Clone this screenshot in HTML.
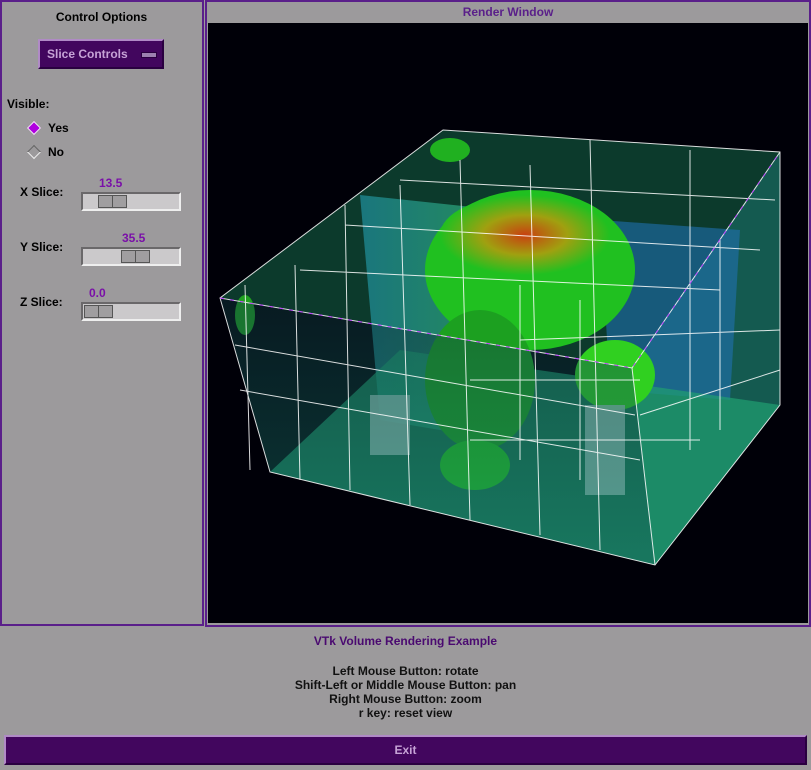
<!DOCTYPE html>
<html><head><style>
body{margin:0;width:811px;height:770px;background:#9c9a9c;font-family:"Liberation Sans",sans-serif;position:relative;overflow:hidden;font-size:12px;font-weight:bold}
.abs{position:absolute}
.left{left:0;top:0;width:204px;height:626px;border:2px solid #5a1f8a;box-sizing:border-box}
.rw{left:205px;top:0;width:606px;height:627px;border:2px solid #5a1f8a;box-sizing:border-box;background:#9c9a9c}
.btn{background:#42065e;color:#c6a2d6;border:2px solid;border-color:#b08ac6 #2a0040 #2a0040 #b08ac6}
.sl{width:100px;height:19px;background:#cbc9cb;border:2px solid;border-color:#6a686a #eee #eee #6a686a;box-sizing:border-box}
.th{position:absolute;top:1px;width:29px;height:13px;background:#a09ea0;border:1px solid #555;box-sizing:border-box}
.th:after{content:"";position:absolute;left:13px;top:0;width:1px;height:11px;background:#555}
.v{color:#7a10a8;font-size:12px}
</style></head><body>
<div class="abs left"></div>
<div class="abs" style="left:0;width:203px;top:10px;text-align:center">Control Options</div>
<div class="abs btn" style="left:38px;top:39px;width:126px;height:30px;line-height:26px;box-sizing:border-box;padding-left:7px">Slice Controls <span style="display:inline-block;width:14px;height:4px;background:#9c80b0;margin-left:10px;vertical-align:middle;border:1px solid #2a0040"></span></div>
<div class="abs" style="left:7px;top:97px">Visible:</div>
<div class="abs" style="left:29px;top:123px;width:8px;height:8px;background:#b000e0;transform:rotate(45deg);border:1px solid #eee"></div>
<div class="abs" style="left:48px;top:121px">Yes</div>
<div class="abs" style="left:29px;top:147px;width:8px;height:8px;background:#9c9a9c;transform:rotate(45deg);border:1px solid;border-color:#666 #eee #eee #666"></div>
<div class="abs" style="left:48px;top:145px">No</div>
<div class="abs" style="left:20px;top:185px">X Slice:</div>
<div class="abs v" style="left:99px;top:176px">13.5</div>
<div class="abs sl" style="left:81px;top:192px"><div class="th" style="left:15px"></div></div>
<div class="abs" style="left:20px;top:240px">Y Slice:</div>
<div class="abs v" style="left:122px;top:231px">35.5</div>
<div class="abs sl" style="left:81px;top:247px"><div class="th" style="left:38px"></div></div>
<div class="abs" style="left:20px;top:295px">Z Slice:</div>
<div class="abs v" style="left:89px;top:286px">0.0</div>
<div class="abs sl" style="left:81px;top:302px"><div class="th" style="left:1px"></div></div>

<div class="abs rw"></div>
<div class="abs" style="left:207px;width:602px;top:5px;text-align:center;color:#5a1f8a">Render Window</div>
<svg class="abs" style="left:208px;top:23px" width="600" height="600" viewBox="208 23 600 600">
<defs>
<radialGradient id="g1" cx="0.5" cy="0.5" r="0.5"><stop offset="0" stop-color="#c84010"/><stop offset="0.5" stop-color="#a0a010"/><stop offset="1" stop-color="#20c020"/></radialGradient>
<linearGradient id="bl" x1="0" y1="0" x2="1" y2="0"><stop offset="0" stop-color="#2090a0"/><stop offset="1" stop-color="#30b070"/></linearGradient>
<linearGradient id="fr" x1="0" y1="0" x2="0" y2="1"><stop offset="0" stop-color="#103a40"/><stop offset="1" stop-color="#1a8070"/></linearGradient>
</defs>
<rect x="208" y="23" width="600" height="600" fill="#000008"/>
<polygon points="443,130 780,152 780,405 632,368 220,298" fill="#0c3a2c"/>
<polygon points="632,368 780,152 780,405 655,565" fill="#145a50"/>
<polygon points="360,195 500,210 500,440 380,420" fill="url(#bl)" opacity="0.7"/>
<polygon points="600,220 740,230 730,400 610,390" fill="#2070b0" opacity="0.6"/>
<polygon points="270,472 655,565 780,405 400,350" fill="#20a070" opacity="0.7"/>
<ellipse cx="530" cy="270" rx="105" ry="80" fill="#20c020"/>
<ellipse cx="525" cy="235" rx="85" ry="40" fill="url(#g1)"/>
<ellipse cx="480" cy="380" rx="55" ry="70" fill="#1ca020"/>
<ellipse cx="475" cy="465" rx="35" ry="25" fill="#20c020"/>
<ellipse cx="615" cy="375" rx="40" ry="35" fill="#30d020"/>
<ellipse cx="450" cy="150" rx="20" ry="12" fill="#20b020"/>
<ellipse cx="245" cy="315" rx="10" ry="20" fill="#20a020"/>
<rect x="370" y="395" width="40" height="60" fill="#a0c8c0" opacity="0.8"/>
<rect x="585" y="405" width="40" height="90" fill="#a0c8c0" opacity="0.8"/>
<polygon points="220,298 632,368 655,565 270,472" fill="url(#fr)" opacity="0.45"/>
<g fill="none" stroke="#fff" stroke-width="1" opacity="0.85">
<polygon points="443,130 780,152 780,405 655,565 270,472 220,298"/>
<polyline points="220,298 632,368 780,152"/><line x1="632" y1="368" x2="655" y2="565"/>
<path d="M250,470 L245,285 M300,480 L295,265 M350,490 L345,205 M410,505 L400,185 M470,520 L460,160 M540,535 L530,165 M600,550 L590,140 M240,390 L640,460 M235,345 L635,415 M300,270 L720,290 M345,225 L760,250 M400,180 L775,200 M520,285 L520,460 M580,300 L580,480 M690,150 L690,450 M720,240 L720,430 M470,380 L640,380 M470,440 L700,440 M520,340 L780,330 M640,415 L780,370"/>
</g>
<polyline points="220,298 632,368 780,152" fill="none" stroke="#c040ff" stroke-dasharray="4,6"/>
</svg>

<div class="abs" style="left:0;width:811px;top:634px;text-align:center;color:#4a0a70">VTk Volume Rendering Example</div>
<div class="abs" style="left:0;width:811px;top:664px;text-align:center;line-height:14px;color:#111">Left Mouse Button: rotate<br>Shift-Left or Middle Mouse Button: pan<br>Right Mouse Button: zoom<br>r key: reset view</div>
<div class="abs btn" style="left:4px;top:735px;width:803px;height:30px;box-sizing:border-box;text-align:center;line-height:26px">Exit</div>
</body></html>
